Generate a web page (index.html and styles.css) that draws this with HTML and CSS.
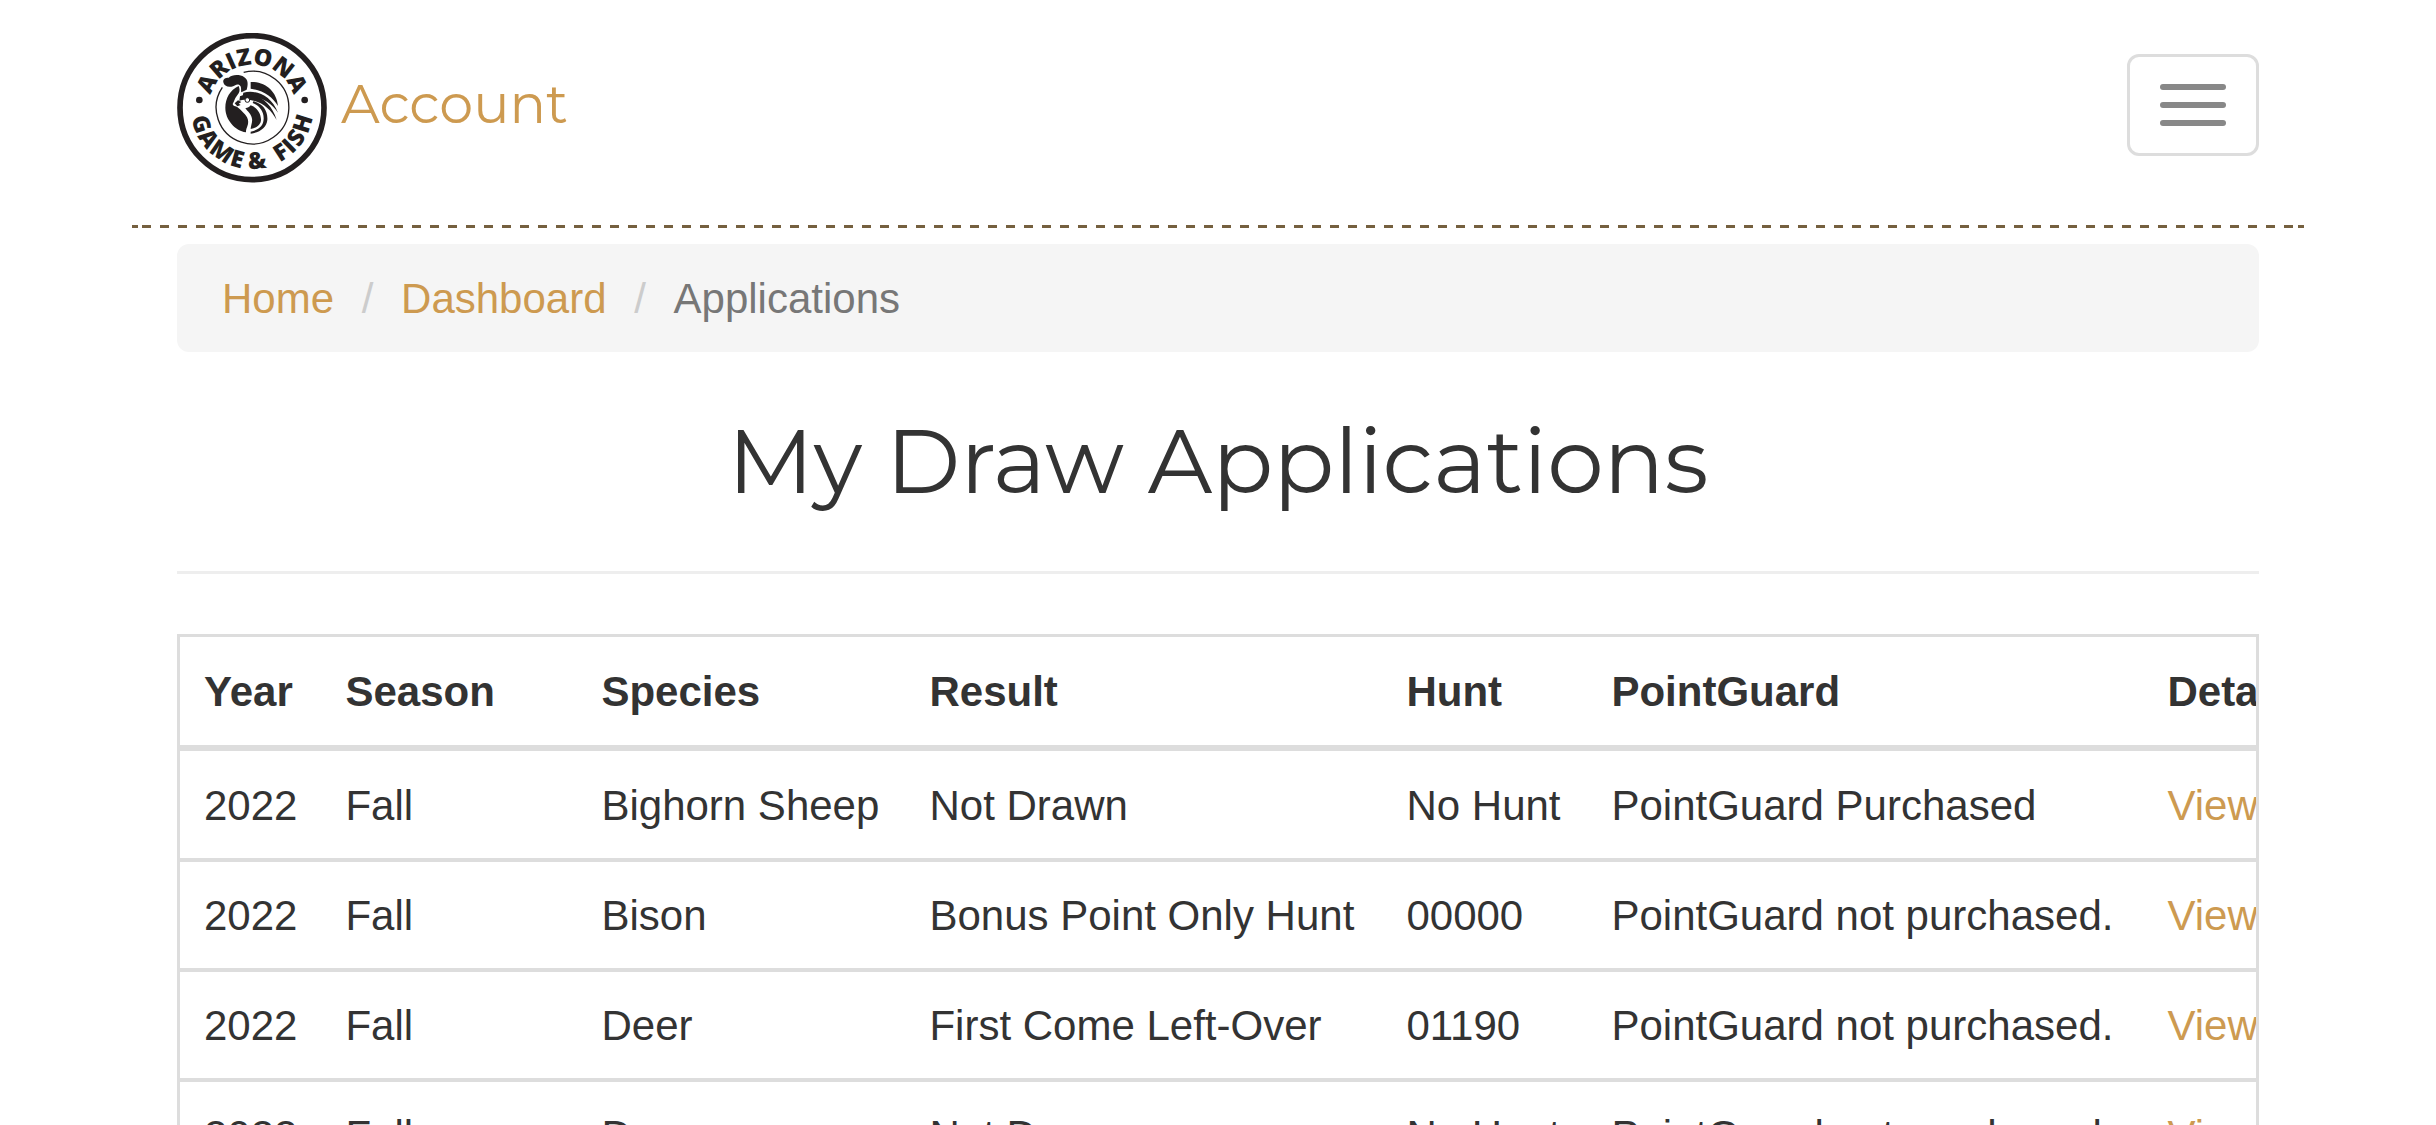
FILE: index.html
```
<!DOCTYPE html>
<html lang="en">
<head>
    <meta charset="UTF-8">
    <meta name="viewport" content="width=device-width, initial-scale=1.0">
    <title>My Draw Applications</title>
    <link rel="stylesheet" href="styles.css">
</head>
<body>
    <header class="navbar">
        <a href="#" class="brand">
            <svg class="logo" viewBox="51 39 450 450" role="img" aria-label="Arizona Game &amp; Fish">
                <defs>
                    <path id="arcTop" d="M147 263a129 129 0 0 1 258 0" />
                    <path id="arcBottom" d="M92 263a184 184 0 0 0 368 0" />
                </defs>
                <circle cx="276" cy="263" r="216" fill="none" stroke="#231f20" stroke-width="17" />
                <circle cx="118" cy="240" r="10" />
                <circle cx="434" cy="240" r="10" />
                <text class="logo-text" text-anchor="middle"><textPath href="#arcTop" startOffset="50%">ARIZONA</textPath></text>
                <text class="logo-text" text-anchor="middle" dx="0 5 5 7"><textPath href="#arcBottom" startOffset="25%">GAME</textPath></text>
                <text class="logo-text" text-anchor="middle"><textPath href="#arcBottom" startOffset="53%">&amp;</textPath></text>
                <text class="logo-text" text-anchor="middle" dx="0 5 5 7"><textPath href="#arcBottom" startOffset="80%">FISH</textPath></text>
                <path d="M251 157A109 109 0 1 1 187 202" fill="none" stroke="#231f20" stroke-width="4" />
                <!-- quail -->
                <path d="M190 187c-2-10 6-14 16-14 10-10 34-10 46-2 14 9 12 24 8 38l-16 8c-2-8 2-16-6-22-8-5-14 4-24 5-12 2-22-3-24-13z" />
                <path d="M236 198c3 8 4 14 0 22-8 10-12 18-15 26-4 5-4 9 2 12 8 2 12 5 17 10 14 14 28 26 24 44-2 9-7 16-6 25-34-6-62-38-62-74 0-28 14-53 40-65z" />
                <path d="M272 186c44-2 78 28 82 72-16-28-46-48-82-52z" />
                <path d="M240 229c40-18 92 10 110 71-20-38-56-66-104-60l-8 2z" />
                <path d="M250 218c38-10 84 8 104 60-24-36-62-52-106-50z" />
                <path d="M272 256c18 6 30 22 31 42 1 14-12 27-31 29 0-10 6-20 4-31-2-14-14-22-20-32 4 1 11-1 16-8z" />
                <path d="M280 244c30 6 44 30 42 56-2 22-22 38-50 41v-6c26-6 38-18 39-38 1-22-12-40-33-48z" />
                <path d="M224 250l10-9 10 5-8 5 6 4-10 4z" />
                <circle cx="262" cy="240" r="7" fill="#fff" stroke="#231f20" stroke-width="3" />
            </svg>
            <span class="brand-name">Account</span>
        </a>
        <button type="button" class="navbar-toggle" aria-label="Toggle navigation">
            <span class="icon-bar"></span>
            <span class="icon-bar"></span>
            <span class="icon-bar"></span>
        </button>
    </header>

    <main class="content">
        <ol class="breadcrumb">
            <li><a href="#">Home</a></li>
            <li><a href="#">Dashboard</a></li>
            <li class="active">Applications</li>
        </ol>

        <h1>My Draw Applications</h1>
        <hr>

        <div class="table-responsive">
            <table class="table">
                <thead>
                    <tr>
                        <th>Year</th>
                        <th class="season">Season</th>
                        <th class="species">Species</th>
                        <th class="result">Result</th>
                        <th class="hunt">Hunt</th>
                        <th class="pointguard">PointGuard</th>
                        <th>Details</th>
                    </tr>
                </thead>
                <tbody>
                    <tr>
                        <td>2022</td>
                        <td>Fall</td>
                        <td>Bighorn Sheep</td>
                        <td>Not Drawn</td>
                        <td>No Hunt</td>
                        <td>PointGuard Purchased</td>
                        <td><a href="#">View</a></td>
                    </tr>
                    <tr>
                        <td>2022</td>
                        <td>Fall</td>
                        <td>Bison</td>
                        <td>Bonus Point Only Hunt</td>
                        <td>00000</td>
                        <td>PointGuard not purchased.</td>
                        <td><a href="#">View</a></td>
                    </tr>
                    <tr>
                        <td>2022</td>
                        <td>Fall</td>
                        <td>Deer</td>
                        <td>First Come Left-Over</td>
                        <td>01190</td>
                        <td>PointGuard not purchased.</td>
                        <td><a href="#">View</a></td>
                    </tr>
                    <tr>
                        <td>2022</td>
                        <td>Fall</td>
                        <td>Deer</td>
                        <td>Not Drawn</td>
                        <td>No Hunt</td>
                        <td>PointGuard not purchased.</td>
                        <td><a href="#">View</a></td>
                    </tr>
                </tbody>
            </table>
        </div>
    </main>
</body>
</html>
```
FILE: styles.css
```
:root {
    --background: #ffffff;
    --foreground: #333333;
    --muted: #f5f5f5;
    --muted-foreground: #777777;
    --border: #dddddd;
    --link: #cd9a50;
    --dash: #75603f;
    --logo: #231f20;
}

* {
    box-sizing: border-box;
}

body {
    margin: 0;
    padding: 0 132px;
    font-family: "Helvetica Neue", Helvetica, "Liberation Sans", Arial, sans-serif;
    font-size: 42px;
    line-height: 60px;
    background-color: var(--background);
    color: var(--foreground);
}

a {
    color: var(--link);
    text-decoration: none;
}

.navbar {
    display: flex;
    justify-content: space-between;
    align-items: flex-start;
    height: 228px;
    padding: 33px 45px 0;
    /* dashed rule with a short dash closing each end */
    background-image:
        linear-gradient(var(--dash), var(--dash)),
        linear-gradient(var(--dash), var(--dash)),
        linear-gradient(90deg, var(--dash) 50%, transparent 50%);
    background-size: 6px 3px, 6px 3px, 18px 3px;
    background-position: left bottom, right bottom, 10px bottom;
    background-repeat: no-repeat, no-repeat, repeat-x;
}

.brand {
    display: flex;
    gap: 14px;
}

.logo {
    width: 150px;
    height: 150px;
    fill: var(--logo);
}

.logo-text {
    font-family: "Open Sans", sans-serif;
    font-size: 70px;
    font-weight: 800;
}

.brand-name {
    font-family: Montserrat, Inter, sans-serif;
    font-size: 54px;
    font-weight: 400;
    line-height: 60px;
    padding-top: 41px;
}

.navbar-toggle {
    display: flex;
    flex-direction: column;
    gap: 12px;
    margin-top: 21px;
    padding: 27px 30px;
    background: transparent;
    border: 3px solid var(--border);
    border-radius: 12px;
    cursor: pointer;
}

.icon-bar {
    width: 66px;
    height: 6px;
    border-radius: 3px;
    background-color: #888888;
}

.content {
    padding: 0 45px;
}

.breadcrumb {
    margin: 16px 0 60px;
    padding: 25px 45px 23px;
    list-style: none;
    background-color: var(--muted);
    border-radius: 12px;
}

.breadcrumb li {
    display: inline-block;
}

.breadcrumb li + li::before {
    content: "/\00a0";
    padding: 0 16px;
    color: #cccccc;
}

.breadcrumb .active {
    color: var(--muted-foreground);
}

h1 {
    margin: 0;
    font-family: Montserrat, Inter, sans-serif;
    font-size: 90px;
    font-weight: 400;
    line-height: 99px;
    text-align: center;
}

hr {
    margin: 60px 0;
    border: 0;
    border-top: 3px solid #eeeeee;
}

.table-responsive {
    overflow: hidden;
    border: 3px solid var(--border);
}

.table {
    width: 100%;
    border-spacing: 0;
    white-space: nowrap;
}

th,
td {
    padding: 24px 24px 22px;
    text-align: left;
    border-bottom: 4px solid var(--border);
}

th {
    padding: 25px 24px 23px;
    border-bottom-width: 6px;
}

.season {
    min-width: 256px;
}

.species {
    min-width: 328px;
}

.result {
    min-width: 477px;
}

.hunt {
    min-width: 205px;
}

.pointguard {
    min-width: 556px;
}

tbody tr:first-child td {
    padding-top: 25px;
}
```
